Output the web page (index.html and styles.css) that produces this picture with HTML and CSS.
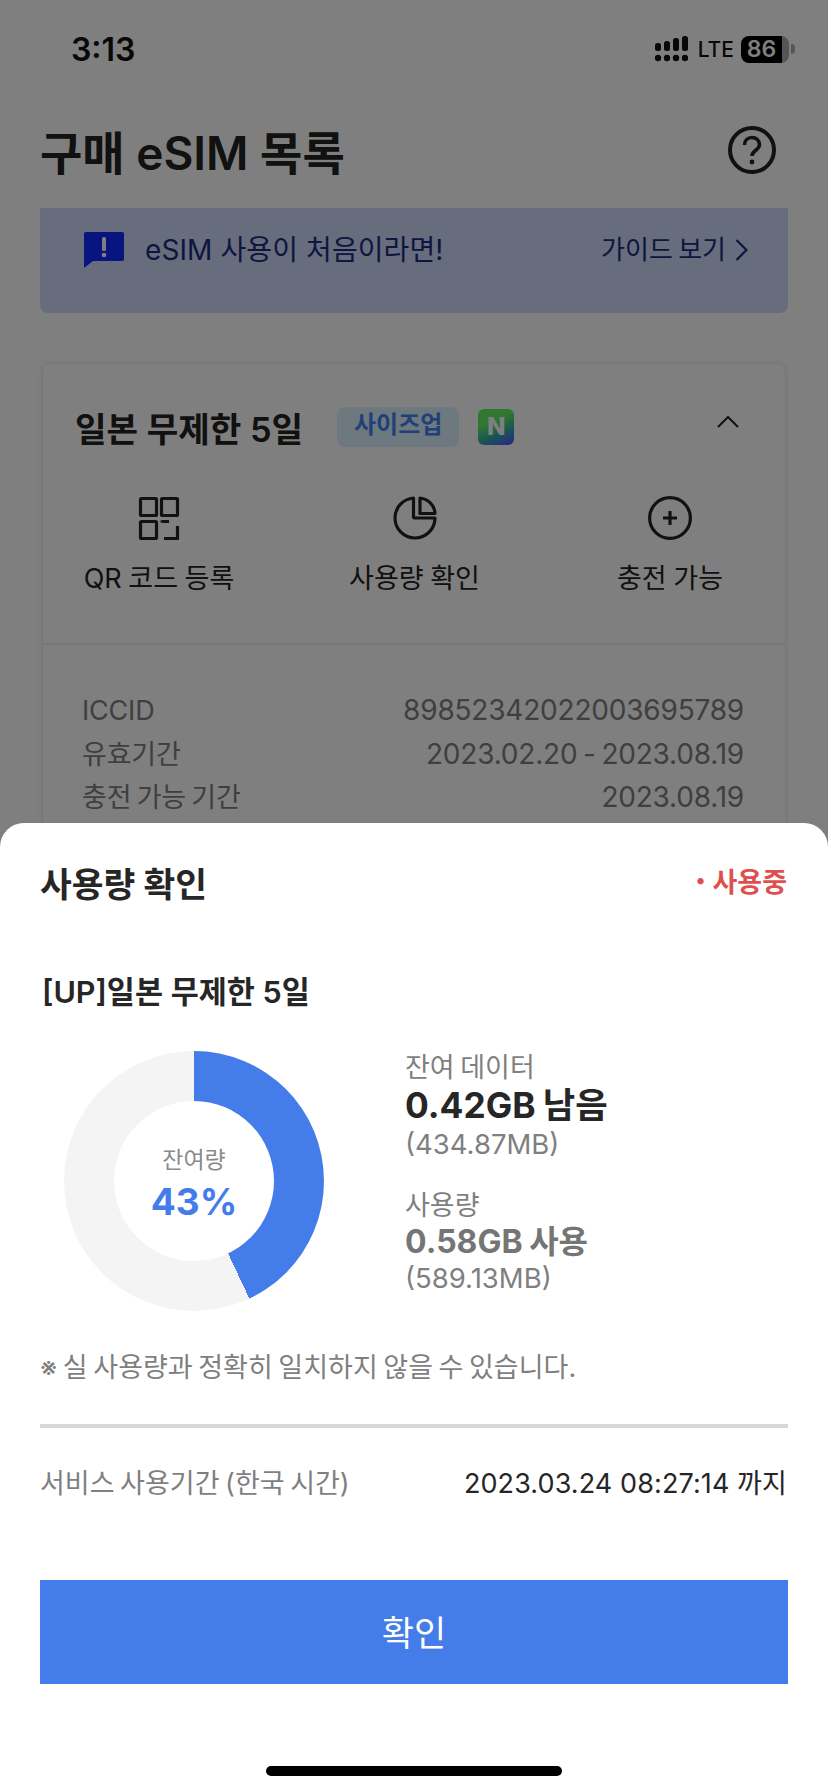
FILE: index.html
```html
<!DOCTYPE html>
<html lang="ko">
<head>
    <meta charset="UTF-8">
    <title>구매 eSIM 목록</title>
    <link rel="stylesheet" href="styles.css">
</head>
<body>
    <div class="screen">
        <div class="statusbar">
            <span class="time">3:13</span>
            <div class="status-right">
                <svg class="signal" width="33" height="26" viewBox="0 0 33 26" fill="#111">
                    <rect x="0" y="7" width="6" height="8" rx="2.5"/>
                    <rect x="9" y="5" width="6" height="10" rx="2.5"/>
                    <rect x="18" y="2" width="6" height="13" rx="2.5"/>
                    <rect x="27" y="0" width="6" height="15" rx="2.5"/>
                    <circle cx="3" cy="22" r="3.2"/>
                    <circle cx="12" cy="22" r="3.2"/>
                    <circle cx="21" cy="22" r="3.2"/>
                    <circle cx="30" cy="22" r="3.2"/>
                </svg>
                <span class="lte">LTE</span>
                <div class="battery">
                    <div class="battery-body">
                        <span class="battery-level">86</span>
                        <span class="battery-rest"></span>
                    </div>
                    <span class="battery-nub"></span>
                </div>
            </div>
        </div>

        <div class="header">
            <h1>구매 eSIM 목록</h1>
            <svg width="48" height="48" viewBox="0 0 48 48" fill="none" stroke="#222" stroke-width="4">
                <circle cx="24" cy="24" r="22"/>
                <path d="M16.5 19c0-4.500 3.300-7.500 7.500-7.500s7.500 3 7.500 7c0 5.500-7.500 6-7.500 11.500" stroke-width="3.600"/>
                <circle cx="24" cy="36" r="2.400" fill="#222" stroke="none"/>
            </svg>
        </div>

        <div class="banner">
            <div class="banner-left">
                <svg width="40" height="36" viewBox="0 0 40 36">
                    <path d="M2 0h36a2 2 0 0 1 2 2v25a2 2 0 0 1-2 2H9l-9 7V2a2 2 0 0 1 2-2z" fill="#1028ff"/>
                    <rect x="18" y="5" width="4" height="14" rx="1.500" fill="#fff"/>
                    <circle cx="20" cy="23" r="2.300" fill="#fff"/>
                </svg>
                <span>eSIM 사용이 처음이라면!</span>
            </div>
            <div class="banner-link">
                <span>가이드 보기</span>
                <svg width="13" height="24" viewBox="0 0 13 24" fill="none" stroke="#1c2c80" stroke-width="2.200">
                    <path d="M1.500 2l10 10-10 10"/>
                </svg>
            </div>
        </div>

        <div class="card">
            <div class="card-head">
                <span class="card-title">일본 무제한 5일</span>
                <span class="badge">사이즈업</span>
                <span class="naver">N</span>
                <svg class="chevron" width="22" height="12" viewBox="0 0 22 12" fill="none" stroke="#222" stroke-width="2">
                    <path d="M1 11L11 1l10 10"/>
                </svg>
            </div>

            <div class="actions">
                <div class="action">
                    <svg width="44" height="44" viewBox="0 0 44 44" fill="none" stroke="#222" stroke-width="3.200" stroke-linejoin="round">
                        <rect x="3.500" y="2.500" width="16" height="17" rx="1"/>
                        <rect x="24.500" y="2.500" width="16" height="17" rx="1"/>
                        <rect x="3.500" y="25.500" width="16" height="17" rx="1"/>
                        <path d="M25 26.500v-1h7M40.500 30v12.500H27"/>
                    </svg>
                    <span>QR 코드 등록</span>
                </div>
                <div class="action">
                    <svg width="44" height="44" viewBox="0 0 44 44" fill="none" stroke="#222" stroke-width="3.200" stroke-linejoin="round">
                        <path d="M20.500 2C10 3 2 11.500 2 22c0 11 9 20 20 20s20-9 20-20H22a1.500 1.500 0 0 1-1.500-1.500z"/>
                        <path d="M27 2c8 1 14.500 7 15 15.500H27z"/>
                    </svg>
                    <span>사용량 확인</span>
                </div>
                <div class="action">
                    <svg width="44" height="44" viewBox="0 0 44 44" fill="none" stroke="#222" stroke-width="3.200">
                        <circle cx="22" cy="22" r="20.400"/>
                        <path d="M22 15v14M15 22h14"/>
                    </svg>
                    <span>충전 가능</span>
                </div>
            </div>

            <div class="details">
                <div class="detail-row"><span class="detail-label">ICCID</span><span>89852342022003695789</span></div>
                <div class="detail-row"><span class="detail-label">유효기간</span><span>2023.02.20 - 2023.08.19</span></div>
                <div class="detail-row"><span class="detail-label">충전 가능 기간</span><span>2023.08.19</span></div>
            </div>
        </div>

        <div class="overlay"></div>

        <div class="sheet">
            <div class="sheet-head">
                <h2>사용량 확인</h2>
                <span class="state"><span class="state-dot">•</span>사용중</span>
            </div>

            <h3>[UP]일본 무제한 5일</h3>

            <div class="usage">
                <div class="donut">
                    <div class="donut-hole">
                        <span class="donut-label">잔여량</span>
                        <span class="donut-value">43%</span>
                    </div>
                </div>
                <div class="stats">
                    <div class="stat-label">잔여 데이터</div>
                    <div class="stat-value left">0.42GB 남음</div>
                    <div class="stat-sub">(434.87MB)</div>
                    <div class="stat-label second">사용량</div>
                    <div class="stat-value used">0.58GB 사용</div>
                    <div class="stat-sub">(589.13MB)</div>
                </div>
            </div>

            <p class="note">※ 실 사용량과 정확히 일치하지 않을 수 있습니다.</p>

            <div class="rule"></div>

            <div class="service">
                <span class="service-label">서비스 사용기간 (한국 시간)</span>
                <span class="service-date">2023.03.24 08:27:14 까지</span>
            </div>

            <button class="confirm" type="button">확인</button>

            <div class="home-bar"></div>
        </div>
    </div>
</body>
</html>
```

FILE: styles.css
```css
* {
    box-sizing: border-box;
}

body {
    font-family: Inter, "Noto Sans CJK KR", sans-serif;
    background: #fff;
    margin: 0;
}

h1, h2, h3, p {
    margin: 0;
}

.screen {
    position: relative;
    width: 828px;
    height: 1792px;
    overflow: hidden;
    background: #fff;
}

/* status bar */
.statusbar {
    height: 100px;
    padding: 0 33px 2px 71px;
    display: flex;
    align-items: center;
    justify-content: space-between;
}

.time {
    font-size: 32px;
    font-weight: 600;
    color: #111;
}

.status-right {
    display: flex;
    align-items: center;
}

.lte {
    margin-left: 10px;
    font-size: 21px;
    font-weight: 500;
    color: #111;
}

.battery {
    margin-left: 7px;
    display: flex;
    align-items: center;
}

.battery-body {
    display: flex;
    width: 48px;
    height: 27px;
    border-radius: 8px;
    overflow: hidden;
}

.battery-level {
    width: 41px;
    background: #000;
    color: #fff;
    font-size: 23px;
    font-weight: 600;
    line-height: 27px;
    text-align: center;
}

.battery-rest {
    flex: 1;
    background: #aaa;
}

.battery-nub {
    width: 4px;
    height: 10px;
    margin-left: 2px;
    background: #aaa;
    border-radius: 0 4px 4px 0;
}

/* page underneath */
.header {
    height: 108px;
    padding: 0 52px 8px 40px;
    display: flex;
    align-items: center;
    justify-content: space-between;
}

h1 {
    font-size: 46px;
    font-weight: 600;
    color: #222;
}

.banner {
    height: 105px;
    margin: 0 40px;
    padding: 22px 40px 0 44px;
    display: flex;
    align-items: flex-start;
    justify-content: space-between;
    background: #cedaf8;
    border-radius: 0 0 8px 8px;
    color: #1c2c80;
    font-size: 28px;
    line-height: 40px;
}

.banner-left {
    display: flex;
    align-items: center;
    gap: 21px;
    letter-spacing: 0.1px;
}

.banner-link {
    display: flex;
    align-items: center;
    gap: 9px;
    font-size: 26px;
    word-spacing: -2px;
}

.card {
    margin: 50px 42px 0;
    padding-bottom: 60px;
    border: 1px solid #eee;
    border-radius: 8px;
    box-shadow: 0 0 6px rgba(0, 0, 0, 0.08);
}

.card-head {
    height: 40px;
    margin-top: 43px;
    padding: 0 46px 0 32px;
    display: flex;
    align-items: center;
}

.card-title {
    font-size: 34.3px;
    font-weight: 600;
    color: #222;
}

.badge {
    margin-left: 34px;
    width: 122px;
    height: 40px;
    background: #dcf0ff;
    border-radius: 8px;
    color: #4080f0;
    font-size: 24px;
    font-weight: 700;
    line-height: 36px;
    text-align: center;
}

.naver {
    margin-left: 19px;
    width: 36px;
    height: 36px;
    border-radius: 6px;
    background: linear-gradient(155deg, #60f060 35%, #30b0a0 65%, #4a60ff 92%);
    color: #fff;
    font-size: 24px;
    font-weight: 800;
    line-height: 36px;
    text-align: center;
}

.chevron {
    margin-left: auto;
    margin-bottom: 10px;
}

.actions {
    margin-top: 49px;
    padding: 0 25px 44px 26px;
    display: flex;
    justify-content: space-between;
    border-bottom: 2px solid #eee;
}

.action {
    width: 180px;
    display: flex;
    flex-direction: column;
    align-items: center;
    gap: 19px;
    font-size: 27px;
    line-height: 40px;
    word-spacing: -1px;
    color: #222;
}

.details {
    padding: 44px 41px 0 39px;
    font-size: 28px;
    line-height: 43.5px;
    letter-spacing: -0.2px;
    word-spacing: -2px;
    color: #7f7f7f;
}

.detail-row {
    display: flex;
    justify-content: space-between;
}

.detail-label {
    font-size: 27px;
}

.overlay {
    position: absolute;
    inset: 0;
    background: rgba(0, 0, 0, 0.5);
}

/* bottom sheet */
.sheet {
    position: absolute;
    left: 0;
    right: 0;
    bottom: 0;
    height: 969px;
    padding: 40px 40px 0;
    background: #fff;
    border-radius: 24px 24px 0 0;
}

.sheet-head {
    height: 40px;
    display: flex;
    align-items: center;
    justify-content: space-between;
}

h2 {
    margin-top: 4px;
    font-size: 34.5px;
    font-weight: 700;
    line-height: 40px;
    color: #262626;
}

.state {
    margin: 0 1px 6px 0;
    display: flex;
    align-items: center;
    gap: 7px;
    font-size: 27px;
    font-weight: 600;
    color: #e04f4f;
}

.state-dot {
    font-size: 20px;
}

h3 {
    margin-top: 69px;
    margin-left: 2px;
    font-size: 30.5px;
    font-weight: 600;
    line-height: 40px;
    color: #262626;
}

.usage {
    margin-top: 39px;
    display: flex;
}

.donut {
    width: 260px;
    height: 260px;
    margin-left: 24px;
    border-radius: 50%;
    background: conic-gradient(#447de9 0 154.8deg, #f4f4f4 154.8deg 360deg);
    display: flex;
    align-items: center;
    justify-content: center;
}

.donut-hole {
    width: 160px;
    height: 160px;
    border-radius: 50%;
    background: #fff;
    display: flex;
    flex-direction: column;
    align-items: center;
    justify-content: center;
    line-height: 42px;
}

.donut-label {
    font-size: 23px;
    color: #8a8a8a;
}

.donut-value {
    font-size: 37px;
    font-weight: 700;
    color: #447de9;
}

.stats {
    margin-left: 81px;
}

.stat-label {
    font-size: 27px;
    line-height: 34px;
    word-spacing: -2px;
    color: #7f7f7f;
}

.stat-label.second {
    margin-top: 28px;
}

.stat-value {
    font-weight: 700;
}

.stat-value.left {
    font-size: 35.3px;
    line-height: 42px;
    word-spacing: -1px;
    color: #262626;
}

.stat-value.used {
    font-size: 32px;
    line-height: 38px;
    word-spacing: -1px;
    color: #757575;
}

.stat-sub {
    font-size: 27.5px;
    line-height: 34px;
    color: #7f7f7f;
}

.note {
    margin-top: 37px;
    font-size: 27px;
    line-height: 40px;
    word-spacing: -2px;
    color: #7f7f7f;
}

.rule {
    height: 4px;
    margin-top: 36px;
    background: #d8d8d8;
}

.service {
    margin-top: 36px;
    display: flex;
    justify-content: space-between;
    font-size: 27px;
    line-height: 40px;
}

.service-label {
    word-spacing: -2px;
    color: #7f7f7f;
}

.service-date {
    margin-right: 1px;
    letter-spacing: 0.1px;
    color: #262626;
}

.confirm {
    display: block;
    width: 100%;
    height: 104px;
    margin-top: 76px;
    padding: 0 0 4px;
    background: #447de9;
    border: none;
    color: #fff;
    font-family: inherit;
    font-size: 35px;
    cursor: pointer;
}

.home-bar {
    width: 296px;
    height: 10px;
    margin: 82px auto 0;
    background: #000;
    border-radius: 5px;
}
```
